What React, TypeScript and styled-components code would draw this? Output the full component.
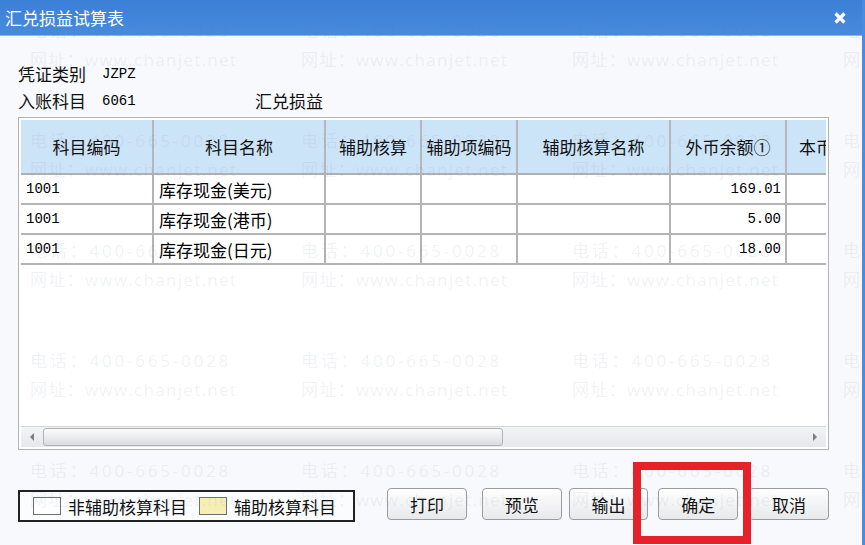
import styled, { createGlobalStyle } from 'styled-components';

const GlobalStyle = createGlobalStyle`
  html, body {
    margin: 0;
    padding: 0;
  }

  body {
    font-family: "Noto Sans CJK SC", "Noto Sans", sans-serif;
    background: #f7f9fd;
  }
`;

const Window = styled.div`
  position: relative;
  width: 865px;
  height: 545px;
  box-sizing: border-box;
  overflow: hidden;
  display: flex;
  flex-direction: column;
  background: #f7f9fd;
  border-right: 3px solid #4a8ce0;
  color: #111;
`;

const TitleBar = styled.header`
  flex: none;
  height: 35px;
  display: flex;
  align-items: center;
  justify-content: space-between;
  padding: 0 15px 0 5px;
  background: linear-gradient(#3c7fd7, #468bdd);
  border-bottom: 1px solid #8db6e8;
  color: #fff;
  font-size: 17px;
`;

const Body = styled.main`
  display: flex;
  flex-direction: column;
  padding: 24px 33px 0 18px;
`;

const InfoRow = styled.div`
  display: flex;
  align-items: center;
  height: 27px;
  font-size: 17px;
`;

const Label = styled.span`
  width: 84px;
`;

const Code = styled.span`
  width: 153px;
  font-family: "Liberation Mono", monospace;
  font-size: 14px;
  color: #000;
`;

const GridBox = styled.section`
  margin-top: 3px;
  height: 333px;
  box-sizing: border-box;
  border: 1px solid #b3b3b3;
  padding: 2px;
  background: #fff;
  display: flex;
  flex-direction: column;
`;

const GridArea = styled.div`
  flex: 1;
  overflow: hidden;
`;

const GridRow = styled.div<{ $h: number }>`
  display: grid;
  grid-template-columns: 133px 172px 96px 96px 153px 116px 60px;
  height: ${({ $h }) => $h}px;
`;

const HeadCell = styled.div`
  display: flex;
  align-items: center;
  justify-content: center;
  box-sizing: border-box;
  background: #cce4f8;
  border-right: 2px solid #b4b8bc;
  border-bottom: 2px solid #b0b0b0;
  font-size: 17px;
  white-space: nowrap;
  overflow: hidden;
`;

const Cell = styled.div<{ $right?: boolean; $mono?: boolean }>`
  display: flex;
  align-items: center;
  justify-content: ${({ $right }) => ($right ? 'flex-end' : 'flex-start')};
  box-sizing: border-box;
  padding: 0 4px 0 5px;
  border-right: 2px solid #b4b4b4;
  border-bottom: 2px solid #b4b4b4;
  font-family: ${({ $mono }) =>
    $mono ? '"Liberation Mono", monospace' : '"Noto Sans CJK SC", sans-serif'};
  font-size: ${({ $mono }) => ($mono ? '14px' : '17px')};
  color: #000;
  white-space: nowrap;
`;

const ScrollBar = styled.div`
  flex: none;
  height: 20px;
  display: flex;
  border-top: 1px solid #d4d6da;
  background: linear-gradient(#f2f3f5, #e6e8eb);
`;

const ArrowButton = styled.div`
  width: 22px;
  display: flex;
  align-items: center;
  justify-content: center;
`;

const Thumb = styled.div`
  width: 460px;
  margin: 1px 0;
  box-sizing: border-box;
  border: 1px solid #aeb1b8;
  border-radius: 3px;
  background: linear-gradient(#fcfcfc, #dadce0);
`;

const Track = styled.div`
  flex: 1;
`;

const Footer = styled.footer`
  display: flex;
  align-items: flex-start;
  margin-top: 38px;
`;

const Legend = styled.div`
  width: 338px;
  height: 32px;
  margin-top: 2px;
  box-sizing: border-box;
  display: flex;
  align-items: center;
  padding-left: 13px;
  border: 2px solid #222;
  background: #fbfcfe;
  font-size: 17px;
`;

const Swatch = styled.span<{ $color: string; $ml?: number }>`
  width: 28px;
  height: 18px;
  box-sizing: border-box;
  margin: 0 7px 0 ${({ $ml }) => $ml ?? 0}px;
  border: 1px solid #707070;
  background: ${({ $color }) => $color};
`;

const Button = styled.button<{ $ml: number }>`
  width: 80px;
  height: 32px;
  margin-left: ${({ $ml }) => $ml}px;
  border: 1px solid #9c9c9c;
  border-radius: 4px;
  background: linear-gradient(#fefefe, #e8e9eb);
  font-family: "Noto Sans CJK SC", sans-serif;
  font-size: 17px;
  color: #111;
  padding: 0;
`;

const Watermark = styled.div`
  position: absolute;
  inset: 0;
  pointer-events: none;
  padding: 16px 0 0 30px;
  display: grid;
  grid-template-columns: repeat(4, 271px);
  grid-auto-rows: 110px;
  overflow: hidden;
`;

const Mark = styled.div`
  display: flex;
  flex-direction: column;
  font-family: "Open Sans", "Noto Sans CJK SC", sans-serif;
  font-size: 17px;
  line-height: 29px;
  color: rgba(110, 125, 150, 0.1);
  white-space: nowrap;
`;

const MarkLine = styled.span<{ $spacing: number }>`
  letter-spacing: ${({ $spacing }) => $spacing}px;
`;

const Highlight = styled.div`
  position: absolute;
  left: 633px;
  top: 462px;
  width: 118px;
  height: 82px;
  box-sizing: border-box;
  border: 8px solid #e62129;
  pointer-events: none;
`;

const headers = ['科目编码', '科目名称', '辅助核算', '辅助项编码', '辅助核算名称', '外币余额①', '本币'];

const rows = [
  { code: '1001', name: '库存现金(美元)', amount: '169.01' },
  { code: '1001', name: '库存现金(港币)', amount: '5.00' },
  { code: '1001', name: '库存现金(日元)', amount: '18.00' },
];

const buttons = [
  { text: '打印', ml: 32 },
  { text: '预览', ml: 15 },
  { text: '输出', ml: 7 },
  { text: '确定', ml: 10 },
  { text: '取消', ml: 11 },
];

const CloseIcon = () => (
  <svg width="14" height="14" viewBox="0 0 14 14">
    <path d="M2.5 2.5 L11.5 11.5 M11.5 2.5 L2.5 11.5" stroke="#fff" strokeWidth="3.2" />
  </svg>
);

const Arrow = ({ left }: { left?: boolean }) => (
  <svg width="6" height="8" viewBox="0 0 6 8">
    <path d={left ? 'M5 0 L1 4 L5 8 Z' : 'M1 0 L5 4 L1 8 Z'} fill="#7a7d84" />
  </svg>
);

const App = () => {
  return (
    <>
      <GlobalStyle />
      <Window>
        <TitleBar>
          <span>汇兑损益试算表</span>
          <CloseIcon />
        </TitleBar>
        <Body>
          <InfoRow>
            <Label>凭证类别</Label>
            <Code>JZPZ</Code>
          </InfoRow>
          <InfoRow>
            <Label>入账科目</Label>
            <Code>6061</Code>
            <span>汇兑损益</span>
          </InfoRow>
          <GridBox>
            <GridArea>
              <GridRow $h={55}>
                {headers.map((h) => (
                  <HeadCell key={h}>{h}</HeadCell>
                ))}
              </GridRow>
              {rows.map((r) => (
                <GridRow $h={30} key={r.name}>
                  <Cell $mono>{r.code}</Cell>
                  <Cell>{r.name}</Cell>
                  <Cell />
                  <Cell />
                  <Cell />
                  <Cell $mono $right>
                    {r.amount}
                  </Cell>
                  <Cell />
                </GridRow>
              ))}
            </GridArea>
            <ScrollBar>
              <ArrowButton>
                <Arrow left />
              </ArrowButton>
              <Thumb />
              <Track />
              <ArrowButton>
                <Arrow />
              </ArrowButton>
            </ScrollBar>
          </GridBox>
          <Footer>
            <Legend>
              <Swatch $color="#ffffff" />
              非辅助核算科目
              <Swatch $color="#f6efb4" $ml={12} />
              辅助核算科目
            </Legend>
            {buttons.map((b) => (
              <Button key={b.text} $ml={b.ml}>
                {b.text}
              </Button>
            ))}
          </Footer>
        </Body>
        <Watermark>
          {Array.from({ length: 20 }, (_, i) => (
            <Mark key={i}>
              <MarkLine $spacing={2.8}>电话：400-665-0028</MarkLine>
              <MarkLine $spacing={1.3}>网址：www.chanjet.net</MarkLine>
            </Mark>
          ))}
        </Watermark>
        <Highlight />
      </Window>
    </>
  );
};

export default App;
